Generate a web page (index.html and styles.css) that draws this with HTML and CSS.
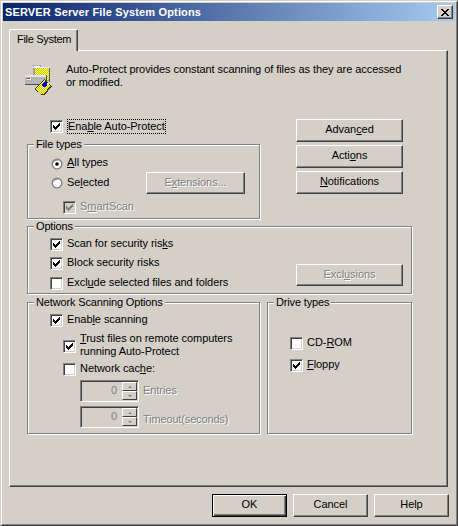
FILE: index.html
```html
<!DOCTYPE html>
<html lang="en">
<head>
<meta charset="utf-8">
<title>SERVER Server File System Options</title>
<link rel="stylesheet" href="styles.css">
</head>
<body>
<div class="dialog">
  <div class="titlebar">
    <span class="title">SERVER Server File System Options</span>
    <span class="close"><svg width="8" height="7" viewBox="0 0 8 7"><path d="M0 0h2v1h1v1h2V1h1V0h2v1H7v1H6v1H5v1h1v1h1v1h1v1H6V6H5V5H3v1H2v1H0V6h1V5h1V4h1V3H2V2H1V1H0z" fill="#000"/></svg></span>
  </div>
  <div class="tabstrip"><div class="tab">File System</div></div>
  <div class="panel">
    <div class="intro">
      <svg class="app-icon" width="32" height="32" viewBox="0 0 32 32" shape-rendering="crispEdges">
        <defs><pattern id="hatch" width="2" height="2" patternUnits="userSpaceOnUse"><rect width="2" height="2" fill="#ffff66"/><rect width="1" height="1" fill="#c8c800"/><rect x="1" y="1" width="1" height="1" fill="#c8c800"/></pattern></defs>
        <path d="M9 2h7v2H9z" fill="#fff" stroke="#808080" stroke-width=".6"/>
        <path d="M9 4h17v14H9z" fill="#a0a0a0"/>
        <path d="M11 5h14v12H11z" fill="url(#hatch)"/>
        <path d="M9 4h17v1H9z" fill="#e8e8e8"/>
        <path d="M25 5h1v14h-1z" fill="#606060"/>
        <path d="M1 12h22v10H1z" fill="#b4b4b4"/>
        <path d="M1 12h22v2H1z" fill="#e4e4e4"/>
        <path d="M1 21h22v1H1zM22 12h1v10h-1z" fill="#505050"/>
        <path d="M3 15h4v2H3z" fill="#fff"/>
        <path d="M3 15h3v1H3z" fill="#d02030"/>
        <path d="M10 26l10-10 8 7-7 9h-3z" fill="#404000"/>
        <path d="M11 26l9-9 6 6-6 8h-3z" fill="url(#hatch)"/>
        <path d="M18 21l3-3 3 3-2 3h-3z" fill="#0000c8"/>
        <path d="M23 20h2v2h-2z" fill="#ffff66"/>
      </svg>
      <p class="intro-text">Auto-Protect provides constant scanning of files as they are accessed or modified.</p>
    </div>

    <div class="upper">
      <div class="upper-left">
        <div class="option enable">
          <span class="check"><svg class="tick" width="7" height="7" viewBox="0 0 7 7"><path d="M6 0h1v3H6v1H5v1H4v1H3v1H2V6H1V5H0V2h1v1h1v1h1V3h1V2h1V1h1z"/></svg></span>
          <span class="focus">Ena<u>b</u>le Auto-Protect</span>
        </div>
        <div class="group filetypes">
          <div class="legend">File types</div>
          <div class="option first">
            <svg class="radio" width="12" height="12" viewBox="0 0 12 12"><circle cx="6" cy="6" r="5.5" fill="#808080"/><path d="M10 2a5.5 5.5 0 0 1-8 8a5.500 5.500 0 0 0 8-8z" fill="#fff"/><circle cx="6" cy="6" r="4.200" fill="#fff"/><path d="M1.800 6a4.200 4.200 0 0 1 7-3.100a5 5 0 0 0-7 3.100z" fill="#404040"/><circle cx="6" cy="6" r="1.800" fill="#000"/></svg>
            <span><u>A</u>ll types</span>
          </div>
          <div class="option selected">
            <svg class="radio" width="12" height="12" viewBox="0 0 12 12"><circle cx="6" cy="6" r="5.500" fill="#808080"/><path d="M10 2a5.500 5.500 0 0 1-8 8a5.500 5.500 0 0 0 8-8z" fill="#fff"/><circle cx="6" cy="6" r="4.200" fill="#fff"/><path d="M1.800 6a4.200 4.200 0 0 1 7-3.100a5 5 0 0 0-7 3.100z" fill="#404040"/></svg>
            <span>Se<u>l</u>ected</span>
            <button class="btn ext disabled">E<u>x</u>tensions...</button>
          </div>
          <div class="option smart disabled-row">
            <span class="check off"><svg class="tick" width="7" height="7" viewBox="0 0 7 7"><path d="M6 0h1v3H6v1H5v1H4v1H3v1H2V6H1V5H0V2h1v1h1v1h1V3h1V2h1V1h1z"/></svg></span>
            <span class="dim">S<u>m</u>artScan</span>
          </div>
        </div>
      </div>
      <div class="upper-right">
        <button class="btn side">Advan<u>c</u>ed</button>
        <button class="btn side">Acti<u>o</u>ns</button>
        <button class="btn side"><u>N</u>otifications</button>
      </div>
    </div>

    <div class="group options">
      <div class="legend">Options</div>
      <div class="options-body">
        <div class="options-list">
          <div class="option o1">
            <span class="check"><svg class="tick" width="7" height="7" viewBox="0 0 7 7"><path d="M6 0h1v3H6v1H5v1H4v1H3v1H2V6H1V5H0V2h1v1h1v1h1V3h1V2h1V1h1z"/></svg></span>
            <span>Scan for security ris<u>k</u>s</span>
          </div>
          <div class="option o2">
            <span class="check"><svg class="tick" width="7" height="7" viewBox="0 0 7 7"><path d="M6 0h1v3H6v1H5v1H4v1H3v1H2V6H1V5H0V2h1v1h1v1h1V3h1V2h1V1h1z"/></svg></span>
            <span>Block security risks</span>
          </div>
          <div class="option o3">
            <span class="check"></span>
            <span>Excl<u>u</u>de selected files and folders</span>
          </div>
        </div>
        <button class="btn side exclusions disabled">Excl<u>u</u>sions</button>
      </div>
    </div>

    <div class="lower">
      <div class="group network">
        <div class="legend">Network Scanning Options</div>
        <div class="option first">
          <span class="check"><svg class="tick" width="7" height="7" viewBox="0 0 7 7"><path d="M6 0h1v3H6v1H5v1H4v1H3v1H2V6H1V5H0V2h1v1h1v1h1V3h1V2h1V1h1z"/></svg></span>
          <span>Enab<u>l</u>e scanning</span>
        </div>
        <div class="option sub trust">
          <span class="check"><svg class="tick" width="7" height="7" viewBox="0 0 7 7"><path d="M6 0h1v3H6v1H5v1H4v1H3v1H2V6H1V5H0V2h1v1h1v1h1V3h1V2h1V1h1z"/></svg></span>
          <span><u>T</u>rust files on remote computers<br>running Auto-Protect</span>
        </div>
        <div class="option sub cache">
          <span class="check"></span>
          <span>Network cac<u>h</u>e:</span>
        </div>
        <div class="spin-row">
          <div class="spin"><span class="spin-value">0</span><span class="spin-btns"><span class="spin-btn"><i class="arrow up"></i></span><span class="spin-btn"><i class="arrow down"></i></span></span></div>
          <span class="dim">Entries</span>
        </div>
        <div class="spin-row">
          <div class="spin"><span class="spin-value">0</span><span class="spin-btns"><span class="spin-btn"><i class="arrow up"></i></span><span class="spin-btn"><i class="arrow down"></i></span></span></div>
          <span class="dim timeout">Timeout(seconds)</span>
        </div>
      </div>
      <div class="group drives">
        <div class="legend">Drive types</div>
        <div class="option cd">
          <span class="check"></span>
          <span>CD-<u>R</u>OM</span>
        </div>
        <div class="option floppy">
          <span class="check"><svg class="tick" width="7" height="7" viewBox="0 0 7 7"><path d="M6 0h1v3H6v1H5v1H4v1H3v1H2V6H1V5H0V2h1v1h1v1h1V3h1V2h1V1h1z"/></svg></span>
          <span><u>F</u>loppy</span>
        </div>
      </div>
    </div>
  </div>
  <div class="footer">
    <button class="btn foot default">OK</button>
    <button class="btn foot">Cancel</button>
    <button class="btn foot">Help</button>
  </div>
</div>
</body>
</html>
```
FILE: styles.css
```css
* { box-sizing: border-box; }
html, body { margin: 0; padding: 0; }
body {
  width: 458px;
  height: 526px;
  overflow: hidden;
  font-family: "Liberation Sans", Arial, sans-serif;
  font-size: 11px;
  line-height: 13px;
  letter-spacing: -0.06px;
  color: #000;
  background: #d4d0c8;
}
.dialog {
  width: 458px;
  height: 526px;
  padding: 2px;
  border: 1px solid;
  border-color: #d4d0c8 #404040 #404040 #d4d0c8;
  box-shadow: inset 1px 1px 0 #fff, inset -1px -1px 0 #808080;
  background: #d4d0c8;
  display: flex;
  flex-direction: column;
}
.titlebar {
  height: 18px;
  flex: none;
  display: flex;
  align-items: center;
  justify-content: space-between;
  padding: 0 2px;
  background: linear-gradient(90deg, #0a246a, #a6caf0);
}
.title { color: #fff; font-weight: 700; letter-spacing: 0.15px; }
.close {
  width: 16px;
  height: 14px;
  display: flex;
  align-items: center;
  justify-content: center;
  background: #d4d0c8;
  border: 1px solid;
  border-color: #fff #404040 #404040 #fff;
  box-shadow: inset -1px -1px 0 #808080;
}
.tabstrip {
  flex: none;
  height: 29px;
  padding: 8px 0 0 6px;
  display: flex;
  align-items: flex-start;
}
.tab {
  width: 69px;
  height: 22px;
  padding: 3px 0 0 7px;
  letter-spacing: -0.3px;
  position: relative;
  z-index: 1;
  background: #d4d0c8;
  border-top: 1px solid #fff;
  border-left: 1px solid #fff;
  border-right: 1px solid #404040;
  border-radius: 2px 2px 0 0;
  box-shadow: inset -1px 0 0 #808080;
}
.panel {
  flex: none;
  width: 439px;
  height: 437px;
  margin-left: 6px;
  padding: 12px 0 0 14px;
  border: 1px solid;
  border-color: #fff #404040 #404040 #fff;
  box-shadow: inset -1px -1px 0 #808080;
}
.intro { display: flex; gap: 10px; height: 32px; }
.app-icon { flex: none; }
.intro-text { margin: 0; width: 345px; }
.upper {
  margin: 24px 0 0 3px;
  display: flex;
  gap: 36px;
  align-items: flex-start;
}
.upper-left { width: 233px; }
.upper-right { display: flex; flex-direction: column; gap: 3px; }
.option { display: flex; align-items: center; gap: 4px; }
.option > span:not(.check):not(.focus) { margin: -1px 0 1px; }
.enable { height: 15px; margin: 0 0 10px 23px; }
.focus { height: 15px; line-height: 13px; outline: 1px dotted #000; outline-offset: -1px; padding: 1px; }
.check {
  flex: none;
  width: 13px;
  height: 13px;
  display: flex;
  align-items: center;
  justify-content: center;
  background: #fff;
  border: 1px solid;
  border-color: #808080 #fff #fff #808080;
  box-shadow: inset 1px 1px 0 #404040, inset -1px -1px 0 #d4d0c8;
}
.check.off { background: #d4d0c8; }
.tick { fill: #000; }
.check.off .tick { fill: #808080; }
.radio { flex: none; margin-left: 1px; }
.group {
  border: 1px solid #808080;
  box-shadow: 1px 1px 0 #fff, inset 1px 1px 0 #fff;
  padding: 0 0 0 22px;
}
.legend {
  width: fit-content;
  height: 13px;
  margin: -7px 0 0 -16px;
  padding: 0 2px;
  background: #d4d0c8;
  letter-spacing: -0.15px;
}
.filetypes { height: 75px; }
.filetypes .first { margin-top: 6px; }
.selected { height: 22px; margin-top: 2px; padding-right: 14px; }
.ext { margin-left: auto; width: 99px; height: 22px; }
.smart { margin: 7px 0 0 13px; }
.options { width: 385px; height: 68px; margin: 7px 0 0 3px; padding-right: 8px; }
.options-body { display: flex; justify-content: space-between; }
.o1 { margin-top: 5px; }
.o2 { margin-top: 6px; }
.o3 { margin-top: 7px; }
.exclusions { align-self: flex-end; height: 22px; margin-bottom: 4px; }
.lower { display: flex; gap: 7px; margin: 8px 0 0 3px; }
.network { width: 233px; height: 132px; }
.network .first { margin-top: 5px; }
.sub { margin-left: 13px; }
.trust { margin-top: 6px; }
.cache { margin-top: 4px; }
.spin-row { display: flex; align-items: center; gap: 4px; margin: 4px 0 0 30px; }
.spin-row .dim { margin-bottom: 2px; }
.spin-row .timeout { margin: 4px 0 0; letter-spacing: -0.15px; }
.spin {
  width: 59px;
  height: 22px;
  display: flex;
  align-items: center;
  justify-content: space-between;
  padding-right: 1px;
  border: 1px solid;
  border-color: #808080 #fff #fff #808080;
  box-shadow: inset 1px 1px 0 #404040, inset -1px -1px 0 #d4d0c8;
  background: #d4d0c8;
}
.spin-value { width: 36px; padding-bottom: 2px; text-align: right; color: #808080; }
.spin-btns { width: 15px; height: 18px; display: flex; flex-direction: column; }
.spin-btn {
  flex: 1;
  display: flex;
  align-items: center;
  justify-content: center;
  border: 1px solid;
  border-color: #fff #404040 #404040 #fff;
  background: #d4d0c8;
}
.arrow { width: 0; height: 0; border: 2px solid transparent; }
.arrow.up { border-top: 0; border-bottom: 2px solid #808080; }
.arrow.down { border-bottom: 0; border-top: 2px solid #808080; }
.dim { color: #808080; text-shadow: 1px 1px 0 #fff; }
.drives { width: 145px; height: 132px; }
.cd { margin-top: 28px; }
.floppy { margin-top: 9px; }
.btn {
  font: inherit;
  letter-spacing: inherit;
  color: #000;
  padding: 0 0 2px;
  background: #d4d0c8;
  border: 1px solid;
  border-color: #fff #404040 #404040 #fff;
  box-shadow: inset -1px -1px 0 #808080;
  border-radius: 0;
}
.btn.disabled { color: #808080; text-shadow: 1px 1px 0 #fff; }
.side { width: 107px; height: 23px; }
.exclusions { height: 22px; }
.footer {
  margin-top: 7px;
  padding-right: 6px;
  display: flex;
  justify-content: flex-end;
  gap: 6px;
}
.foot { width: 75px; height: 23px; }
.default {
  border-color: #000;
  box-shadow: inset 1px 1px 0 #fff, inset -1px -1px 0 #404040, inset -2px -2px 0 #808080;
}
```
